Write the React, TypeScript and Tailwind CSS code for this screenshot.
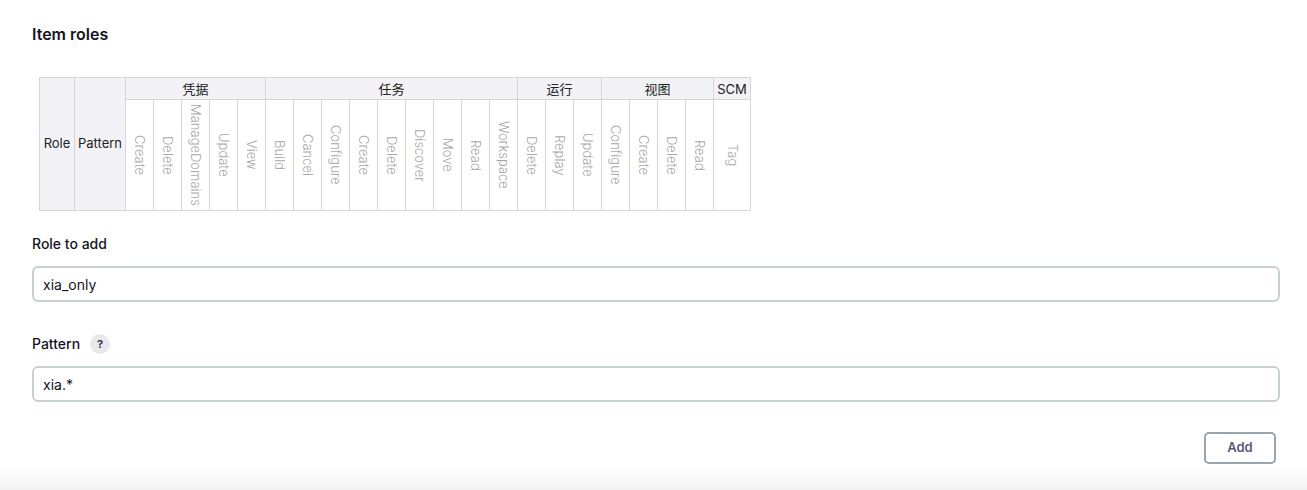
import React from "react";

const groups: { name: string; items: string[]; w?: number }[] = [
  { name: "凭据", items: ["Create", "Delete", "ManageDomains", "Update", "View"] },
  { name: "任务", items: ["Build", "Cancel", "Configure", "Create", "Delete", "Discover", "Move", "Read", "Workspace"] },
  { name: "运行", items: ["Delete", "Replay", "Update"] },
  { name: "视图", items: ["Configure", "Create", "Delete", "Read"] },
  { name: "SCM", items: ["Tag"], w: 37 },
];

const font = { fontFamily: 'Inter, "Noto Sans CJK SC", "Liberation Sans", sans-serif' };

export default function App() {
  return (
    <div className="relative w-[1307px] h-[490px] bg-white overflow-hidden text-[#14141f]" style={font}>
      <div className="pl-8 pr-[27px] pt-[24px]">
        <h2 className="text-[16px] leading-[20px] font-semibold">Item roles</h2>
        <div className="mt-[33px] pl-[7px]">
          <table className="border-collapse text-[13px] text-[#222]">
            <thead>
              <tr className="h-[22px]">
                <th rowSpan={2} className="w-[35px] border border-[#d6d6d6] bg-[#f3f3f7] font-normal px-0">Role</th>
                <th rowSpan={2} className="w-[51px] border border-[#d6d6d6] bg-[#f3f3f7] font-normal px-0">Pattern</th>
                {groups.map((g) => (
                  <th key={g.name} colSpan={g.items.length} className="border border-[#d6d6d6] bg-[#f3f3f7] font-normal p-0 leading-[20px]">
                    {g.name}
                  </th>
                ))}
              </tr>
              <tr className="h-[111px]">
                {groups.map((g) =>
                  g.items.map((it, i) => (
                    <th
                      key={g.name + i}
                      className="border border-[#d6d6d6] bg-white p-0 align-middle"
                      style={{ width: g.w ?? 28 }}
                    >
                      <div className="flex items-center justify-center">
                        <span className="text-[13px] font-light text-[#a8a8a8] [writing-mode:vertical-rl] leading-[15px]">
                          {it}
                        </span>
                      </div>
                    </th>
                  ))
                )}
              </tr>
            </thead>
          </table>
        </div>

        <div className="mt-[24px] text-[14px] leading-[18px] font-medium">Role to add</div>
        <div className="mt-[13px] h-[36px] w-full rounded-[6px] border-2 border-[#c9d0d4] flex items-center px-[9px] text-[14px]">
          xia_only
        </div>

        <div className="mt-[32px] flex items-center gap-[10px]">
          <span className="text-[14px] leading-[18px] font-medium">Pattern</span>
          <span className="w-[20px] h-[20px] rounded-full bg-[#e9e9ed] flex items-center justify-center text-[11px] font-bold text-[#33334d]">?</span>
        </div>
        <div className="mt-[12px] h-[36px] w-full rounded-[6px] border-2 border-[#c9d0d4] flex items-center px-[9px] text-[14px]">
          xia.*
        </div>

        <div className="mt-[30px] flex justify-end pr-[4px]">
          <div className="w-[72px] h-[32px] rounded-[5px] border-2 border-[#9aa4ae] flex items-center justify-center text-[13px] font-semibold text-[#5a5a78]">
            Add
          </div>
        </div>
      </div>
      <div className="absolute left-0 right-0 bottom-0 h-[24px] bg-gradient-to-b from-white to-[#f2f2f2]" />
    </div>
  );
}
